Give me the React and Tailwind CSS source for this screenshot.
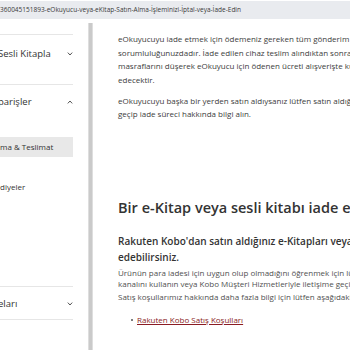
import React from "react";

function Chevron({ up }) {
  return (
    <svg width="6" height="4" viewBox="0 0 6 4" className="shrink-0 ml-auto">
      <path
        d={up ? "M0.8 3.4 L3 1 L5.2 3.4" : "M0.8 0.6 L3 3 L5.2 0.6"}
        fill="none"
        stroke="#555"
        strokeWidth="1"
      />
    </svg>
  );
}

function NavHead({ label, up, width }) {
  return (
    <div className="flex items-center h-[14px]">
      <span
        className="block whitespace-nowrap overflow-hidden text-[9.5px] leading-[14px] text-[#333] -ml-[2px]"
        style={{ width }}
      >
        {label}
      </span>
      <Chevron up={up} />
    </div>
  );
}

export default function App() {
  return (
    <div
      className="w-[350px] h-[350px] overflow-hidden bg-white flex flex-col"
      style={{ fontFamily: '"Open Sans", "Liberation Sans", sans-serif' }}
    >
      {/* URL bar */}
      <div className="mt-[1px] h-[18px] shrink-0 bg-[#e9ebef] flex items-center text-[6.5px] text-[#3a3a3a] whitespace-nowrap overflow-hidden">
        360045151893-eOkuyucu-veya-eKitap-Satın-Alma-İşleminizi-İptal-veya-İade-Edin
      </div>

      <div className="flex flex-1 min-h-0">
        {/* sidebar */}
        <div className="w-[88px] shrink-0 pt-[15px] overflow-hidden">
          <div className="w-[73px] border-t border-[#e6e6e6]">
            <div className="h-[50px] pt-[12px] border-b border-[#e6e6e6]">
              <NavHead label="Sesli Kitapla" width={54} />
            </div>
            <div className="h-[32px] pt-[10px]">
              <NavHead label="parişler" up width={40} />
            </div>
          </div>
          <div className="w-[73px] mt-[20px] h-[20px] bg-[#e8e8e8] flex items-center text-[8px] text-[#333] whitespace-nowrap">
            ma &amp; Teslimat
          </div>
          <div className="mt-[24px] text-[8px] leading-[12px] text-[#333] whitespace-nowrap">diyeler</div>
          <div className="w-[73px] mt-[93px] border-y border-[#e6e6e6] h-[34px] pt-[10px]">
            <NavHead label="eları" width={30} />
          </div>
        </div>

        {/* separator */}
        <div className="w-[5px] shrink-0 mt-[4px] bg-[#cacaca] border-x border-[#dedede]" />

        {/* content */}
        <div className="flex-1 min-w-0 pl-[25px] whitespace-nowrap text-[#3c3c3c]">
          <div className="mt-[13px] text-[8px] leading-[13.7px]">
            <p>eOkuyucuyu iade etmek için ödemeniz gereken tüm gönderim ücretlerinden</p>
            <p>sorumluluğunuzdadır. İade edilen cihaz teslim alındıktan sonra Rakuten Kobo</p>
            <p>masraflarını düşerek eOkuyucu için ödenen ücreti alışverişte kullandığınız</p>
            <p>edecektir.</p>
          </div>
          <div className="mt-[7px] text-[8px] leading-[13.5px]">
            <p>eOkuyucuyu başka bir yerden satın aldıysanız lütfen satın aldığınız mağaza ile</p>
            <p>geçip iade süreci hakkında bilgi alın.</p>
          </div>

          <h2 className="mt-[77px] text-[14.5px] leading-[20px] font-semibold text-[#333]">
            Bir e-Kitap veya sesli kitabı iade edin
          </h2>
          <div className="mt-[15px] text-[10px] leading-[16px] font-semibold text-[#333]">
            <p>Rakuten Kobo'dan satın aldığınız e-Kitapları veya sesli kitapları iade</p>
            <p>edebilirsiniz.</p>
          </div>
          <div className="mt-[2px] text-[8px] leading-[11.5px] text-[#505050]">
            <p>Ürünün para iadesi için uygun olup olmadığını öğrenmek için lütfen iade</p>
            <p>kanalını kullanın veya Kobo Müşteri Hizmetleriyle iletişime geçin.</p>
          </div>
          <p className="mt-[1px] text-[8px] leading-[11.5px] text-[#505050]">
            Satış koşullarımız hakkında daha fazla bilgi için lütfen aşağıdaki bağlantıya
          </p>
          <ul className="mt-[11.5px] ml-[13px] flex text-[8px] leading-[11.5px]">
            <li className="flex items-center gap-[4px]">
              <span className="w-[2px] h-[2px] rounded-full bg-[#555]" />
              <a className="text-[#8a1c24] underline">Rakuten Kobo Satış Koşulları</a>
            </li>
          </ul>
        </div>
      </div>
    </div>
  );
}
